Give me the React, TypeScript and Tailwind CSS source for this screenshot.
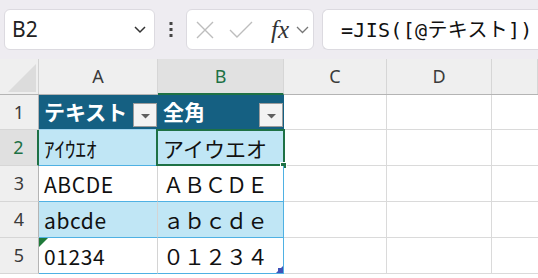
import React from 'react';

const cellFont = { fontFamily: '"Noto Sans", "Noto Sans CJK JP", sans-serif' };
const cjkFont = { fontFamily: '"Noto Sans CJK JP", "Noto Sans", sans-serif' };

const columns = [
  { key: 'A', width: 'w-[119px]' },
  { key: 'B', width: 'w-[126px]' },
  { key: 'C', width: 'w-[103px]' },
  { key: 'D', width: 'w-[105px]' },
  { key: '', width: 'flex-1' },
];

const rows = [
  { a: 'ｱｲｳｴｵ', b: 'アイウエオ', band: true },
  { a: 'ABCDE', b: 'ＡＢＣＤＥ', band: false },
  { a: 'abcde', b: 'ａｂｃｄｅ', band: true },
  { a: '01234', b: '０１２３４', band: false },
];

const FilterButton: React.FC = () => (
  <div className="absolute right-[1px] bottom-[2px] w-[24px] h-[24px] bg-[#f3f3f3] border border-[#9c9c9c] flex items-center justify-center">
    <svg width="9" height="5" viewBox="0 0 9 5" className="mt-[3px]">
      <polygon points="0,0 9,0 4.5,4.5" fill="#5f5f5f" />
    </svg>
  </div>
);

const FormulaBar: React.FC = () => (
  <div className="h-[59px] bg-[#eeecf1] flex items-center pl-[4px] gap-0">
    <div className="w-[151px] h-[41px] bg-white rounded-[6px] border border-[#dcdae0] flex items-center justify-between pl-[7px] pr-[8px]">
      <span className="text-[21px] text-[#222]" style={cellFont}>B2</span>
      <svg width="12" height="8" viewBox="0 0 12 8">
        <polyline points="1,1 6,6 11,1" fill="none" stroke="#333" strokeWidth="1.5" />
      </svg>
    </div>
    <div className="w-[31px] flex justify-center">
      <svg width="4" height="15" viewBox="0 0 4 15">
        <rect x="0.5" y="0" width="3" height="3" fill="#444" />
        <rect x="0.5" y="6" width="3" height="3" fill="#444" />
        <rect x="0.5" y="12" width="3" height="3" fill="#444" />
      </svg>
    </div>
    <div className="w-[128px] h-[41px] bg-white rounded-[6px] border border-[#dcdae0] flex items-center pl-[8px]">
      <svg width="20" height="20" viewBox="0 0 20 20">
        <path d="M2 2 L18 18 M18 2 L2 18" stroke="#bdbdbd" strokeWidth="1.4" fill="none" />
      </svg>
      <svg width="26" height="20" viewBox="0 0 26 20" className="ml-[13px]">
        <polyline points="2,10 9,17 24,2" stroke="#bdbdbd" strokeWidth="1.4" fill="none" />
      </svg>
      <span
        className="ml-[17px] text-[25px] italic text-[#333] leading-none"
        style={{ fontFamily: '"Liberation Serif", "DejaVu Serif", serif' }}
      >
        fx
      </span>
      <svg width="13" height="8" viewBox="0 0 13 8" className="ml-[7px]">
        <polyline points="1,1 6.5,6.5 12,1" fill="none" stroke="#777" strokeWidth="1.3" />
      </svg>
    </div>
    <div className="ml-[8px] flex-1 h-[41px] bg-white rounded-l-[6px] border border-r-0 border-[#dcdae0] flex items-center pl-[18px] overflow-hidden whitespace-nowrap">
      <span
        className="text-[20px] text-[#111] tracking-[0.3px]"
        style={{ fontFamily: '"DejaVu Sans Mono", "Noto Sans CJK JP", monospace' }}
      >
        =JIS([@テキスト])
      </span>
    </div>
  </div>
);

const ColumnHeaders: React.FC = () => (
  <div className="flex h-[36px] bg-[#efefef] border-b border-[#b4b4b4]">
    <div className="w-[39px] shrink-0 border-r border-[#d2d2d2] relative">
      <svg width="30" height="30" viewBox="0 0 30 30" className="absolute left-[7px] top-[4px]">
        <polygon points="29,1 29,29 1,29" fill="#dcdcdc" />
      </svg>
    </div>
    {columns.map((c, i) => (
      <div
        key={i}
        className={`${c.width} shrink-0 flex items-center justify-center border-r border-[#d6d6d6] text-[18px] ${
          c.key === 'B' ? 'bg-[#e1e1e1] text-[#1e7145] border-b-2 border-b-[#1e7145] -mb-[1px]' : 'text-[#3a3a3a]'
        }`}
        style={cellFont}
      >
        {c.key}
      </div>
    ))}
  </div>
);

const RowHeader: React.FC<{ n: number; h: string; selected?: boolean }> = ({ n, h, selected }) => (
  <div
    className={`w-[39px] shrink-0 ${h} flex items-center justify-center text-[18px] border-b border-[#d6d6d6] ${
      selected ? 'bg-[#e0e0e0] text-[#1e7145] border-r-2 border-r-[#1e7145]' : 'bg-[#efefef] text-[#3a3a3a] border-r border-r-[#b4b4b4]'
    }`}
    style={cellFont}
  >
    {n}
  </div>
);

const EmptyCells: React.FC = () => (
  <>
    <div className="w-[103px] shrink-0 border-r border-b border-[#dadada]" />
    <div className="w-[105px] shrink-0 border-r border-b border-[#dadada]" />
    <div className="flex-1 border-b border-[#dadada]" />
  </>
);

export default function App() {
  return (
    <div className="w-[538px] h-[278px] bg-white overflow-hidden">
      <FormulaBar />
      <ColumnHeaders />

      {/* table header row */}
      <div className="flex h-[35px]">
        <RowHeader n={1} h="h-[35px]" />
        <div className="w-[119px] shrink-0 relative bg-[#156082] border-b border-[#9fd3ee] flex items-center pl-[5px]">
          <span className="text-[21px] font-bold text-white" style={cjkFont}>テキスト</span>
          <FilterButton />
        </div>
        <div className="w-[126px] shrink-0 relative bg-[#156082] border-b border-[#9fd3ee] flex items-center pl-[5px]">
          <span className="text-[21px] font-bold text-white" style={cjkFont}>全角</span>
          <FilterButton />
        </div>
        <EmptyCells />
      </div>

      {rows.map((r, i) => {
        const n = i + 2;
        const bg = r.band ? 'bg-[#c0e6f5]' : 'bg-white';
        return (
          <div key={n} className="flex h-[36px]">
            <RowHeader n={n} h="h-[36px]" selected={n === 2} />
            <div
              className={`w-[119px] shrink-0 relative ${bg} border-r border-r-[#d4d4d4] border-b border-b-[#4fb1e3] flex items-center pl-[5px] pt-[2px] text-[21px] text-[#111] ${
                n === 2 ? '' : 'tracking-[0.6px]'
              }`}
              style={cjkFont}
            >
              {n === 5 && (
                <svg width="9" height="9" viewBox="0 0 9 9" className="absolute left-0 top-0">
                  <polygon points="0,0 9,0 0,9" fill="#1f7a3a" />
                </svg>
              )}
              {r.a}
            </div>
            <div
              className={`w-[126px] shrink-0 relative ${bg} border-r border-r-[#4fb1e3] border-b border-b-[#4fb1e3] flex items-center pl-[5px] pt-[2px] text-[21px] text-[#111]`}
              style={cjkFont}
            >
              {r.b}
              {n === 2 && (
                <>
                  <div className="absolute -left-[2px] -top-[1px] -right-[2px] -bottom-[1px] border-2 border-[#1e7145]" />
                  <div className="absolute -right-[4px] -bottom-[4px] w-[7px] h-[7px] bg-[#1e7145] border border-white" />
                </>
              )}
              {n === 5 && (
                <svg width="7" height="7" viewBox="0 0 7 7" className="absolute right-0 bottom-0">
                  <polygon points="7,0 7,7 0,7" fill="#3f52b8" />
                  <rect x="2" y="2" width="5" height="5" fill="#3f52b8" />
                </svg>
              )}
            </div>
            <EmptyCells />
          </div>
        );
      })}
    </div>
  );
}
